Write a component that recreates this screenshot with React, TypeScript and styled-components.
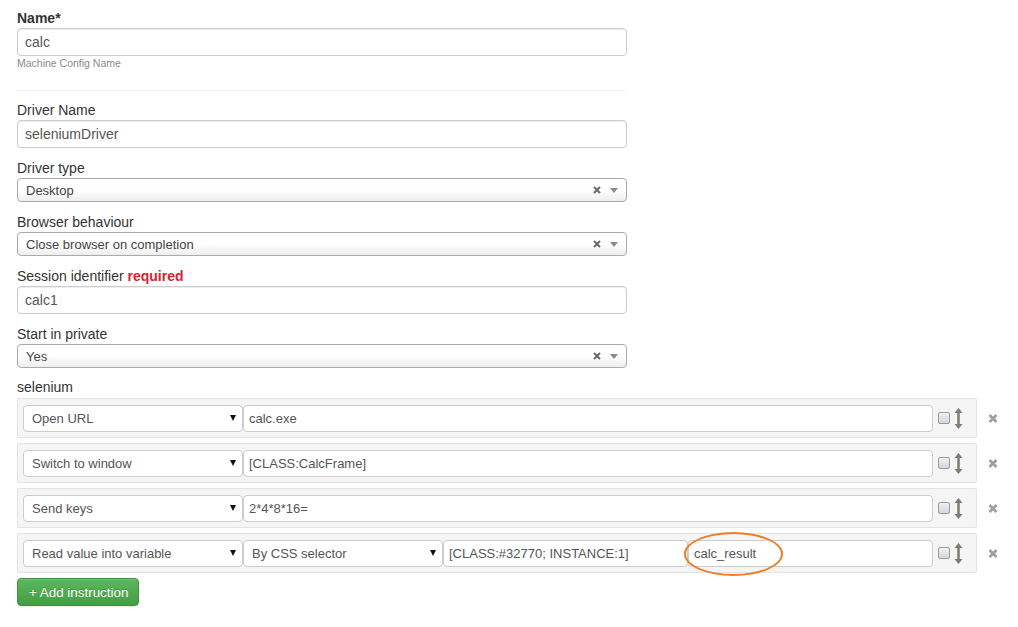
import styled, { createGlobalStyle } from "styled-components";

const GlobalStyle = createGlobalStyle`
  body {
    margin: 0;
    background: #fff;
    font-family: "Liberation Sans", Arial, sans-serif;
    color: #333;
  }
`;

const Page = styled.div`
  padding: 8px 17px 20px;
`;

const Form = styled.div`
  width: 610px;
`;

const Field = styled.div<{ $gap?: number }>`
  margin-bottom: ${(p) => (p.$gap ?? 10)}px;
`;

const Label = styled.div<{ $strong?: boolean }>`
  height: 20px;
  line-height: 20px;
  font-size: 14px;
  font-weight: ${(p) => (p.$strong ? 700 : 400)};
  color: #333;
`;

const Required = styled.span`
  color: #d9232e;
  font-weight: 700;
`;

const TextInput = styled.div`
  box-sizing: border-box;
  height: 28px;
  line-height: 26px;
  padding: 0 7px;
  border: 1px solid #ccc;
  border-radius: 4px;
  background: #fff;
  box-shadow: inset 0 1px 1px rgba(0, 0, 0, 0.075);
  font-size: 14px;
  color: #555;
`;

const Help = styled.div`
  margin-top: 1px;
  height: 12px;
  line-height: 12px;
  font-size: 10.5px;
  color: #8a8a8a;
`;

const Divider = styled.hr`
  margin: 21px 2px 9px 0;
  border: 0;
  border-top: 1px solid #eee;
`;

const Choice = styled.div`
  box-sizing: border-box;
  display: flex;
  align-items: center;
  height: 24px;
  padding: 0 8px;
  border: 1px solid #aaa;
  border-radius: 4px;
  background: linear-gradient(to top, #eee 0%, #fff 50%);
  font-size: 13px;
  color: #444;
`;

const ChoiceText = styled.span`
  flex: 1;
`;

const ChoiceClear = styled.svg`
  margin-right: 9px;
`;

const ChoiceArrow = styled.svg`
  margin-top: 1px;
`;

const SectionLabel = styled.div`
  height: 21px;
  line-height: 20px;
  font-size: 14px;
  color: #333;
`;

const InstructionList = styled.div`
  display: flex;
  flex-direction: column;
  gap: 5px;
`;

const InstructionLine = styled.div`
  display: flex;
  align-items: center;
`;

const Well = styled.div`
  box-sizing: border-box;
  display: flex;
  align-items: center;
  width: 960px;
  height: 40px;
  padding: 5px;
  border: 1px solid #e3e3e3;
  border-radius: 2px;
  background: #f5f5f5;
`;

const Dropdown = styled.div<{ $width: number; $pad?: number }>`
  box-sizing: border-box;
  display: flex;
  align-items: center;
  width: ${(p) => p.$width}px;
  height: 27px;
  padding: 0 6px 0 ${(p) => p.$pad ?? 8}px;
  border: 1px solid #ccc;
  border-radius: 4px;
  background: #fff;
  font-size: 13px;
  color: #555;
`;

const DropdownText = styled.span`
  flex: 1;
`;

const Caret = styled.span`
  width: 0;
  height: 0;
  border-left: 3.5px solid transparent;
  border-right: 3.5px solid transparent;
  border-top: 6px solid #111;
`;

const ValueBox = styled.div`
  position: relative;
  box-sizing: border-box;
  flex: 1;
  height: 27px;
  line-height: 25px;
  padding: 0 5px;
  border: 1px solid #ccc;
  border-radius: 4px;
  background: #fff;
  font-size: 13px;
  color: #555;
  white-space: nowrap;
`;

const Highlight = styled.span`
  position: absolute;
  left: -5px;
  top: -9px;
  width: 95px;
  height: 40px;
  border: 2px solid #f07b24;
  border-radius: 50%;
`;

const Tools = styled.div`
  display: flex;
  align-items: center;
  width: 38px;
`;

const Tick = styled.span`
  box-sizing: border-box;
  width: 12px;
  height: 12px;
  margin-left: 5px;
  border: 1px solid #9a9a9a;
  border-radius: 2px;
  background: linear-gradient(#f0f0f0, #d6d6d6);
`;

const Grip = styled.svg`
  margin-left: 4px;
`;

const Remove = styled.svg`
  margin-left: 11px;
`;

const AddButton = styled.button`
  margin-top: 5px;
  height: 28px;
  padding: 0 10px 0 11px;
  border: 1px solid #3e8f3e;
  border-radius: 4px;
  background: linear-gradient(#5cb85c, #449d44);
  box-shadow: inset 0 1px 0 rgba(255, 255, 255, 0.15), 0 1px 1px rgba(0, 0, 0, 0.075);
  color: #fff;
  font: 13.4px "Liberation Sans", Arial, sans-serif;
  text-shadow: 0 -1px 0 rgba(0, 0, 0, 0.2);
`;

function SelectBox({ value }: { value: string }) {
  return (
    <Choice>
      <ChoiceText>{value}</ChoiceText>
      <ChoiceClear width="8" height="8" viewBox="0 0 8 8">
        <path d="M1 1 L7 7 M7 1 L1 7" stroke="#6a6a6a" strokeWidth="2" />
      </ChoiceClear>
      <ChoiceArrow width="8" height="5" viewBox="0 0 8 5">
        <polygon points="0,0 8,0 4,5" fill="#8a8a8a" />
      </ChoiceArrow>
    </Choice>
  );
}

function RowTools() {
  return (
    <Tools>
      <Tick />
      <Grip width="9" height="21" viewBox="0 0 9 21">
        <line x1="4.5" y1="3" x2="4.5" y2="18" stroke="#c8a060" strokeWidth="2.6" />
        <line x1="4.5" y1="3" x2="4.5" y2="18" stroke="#7c7c7c" strokeWidth="2" />
        <polygon points="0.5,5 4.5,0 8.5,5" fill="#7c7c7c" />
        <polygon points="0.5,16 4.5,21 8.5,16" fill="#7c7c7c" />
      </Grip>
    </Tools>
  );
}

function RemoveIcon() {
  return (
    <Remove width="10" height="9" viewBox="0 0 10 9">
      <path d="M1.5 1 L8.5 8 M8.5 1 L1.5 8" stroke="#a0a0a0" strokeWidth="2.8" />
    </Remove>
  );
}

const steps = [
  { command: "Open URL", value: "calc.exe" },
  { command: "Switch to window", value: "[CLASS:CalcFrame]" },
  { command: "Send keys", value: "2*4*8*16=" },
];

export default function App() {
  return (
    <Page>
      <GlobalStyle />
      <Form>
        <Label $strong>Name*</Label>
        <TextInput>calc</TextInput>
        <Help>Machine Config Name</Help>
        <Divider />

        <Field>
          <Label>Driver Name</Label>
          <TextInput>seleniumDriver</TextInput>
        </Field>
        <Field>
          <Label>Driver type</Label>
          <SelectBox value="Desktop" />
        </Field>
        <Field>
          <Label>Browser behaviour</Label>
          <SelectBox value="Close browser on completion" />
        </Field>
        <Field>
          <Label>
            Session identifier <Required>required</Required>
          </Label>
          <TextInput>calc1</TextInput>
        </Field>
        <Field $gap={9}>
          <Label>Start in private</Label>
          <SelectBox value="Yes" />
        </Field>
      </Form>

      <SectionLabel>selenium</SectionLabel>
      <InstructionList>
        {steps.map((s) => (
          <InstructionLine key={s.command}>
            <Well>
              <Dropdown $width={220}>
                <DropdownText>{s.command}</DropdownText>
                <Caret />
              </Dropdown>
              <ValueBox>{s.value}</ValueBox>
              <RowTools />
            </Well>
            <RemoveIcon />
          </InstructionLine>
        ))}
        <InstructionLine>
          <Well>
            <Dropdown $width={220}>
              <DropdownText>Read value into variable</DropdownText>
              <Caret />
            </Dropdown>
            <Dropdown $width={200}>
              <DropdownText>By CSS selector</DropdownText>
              <Caret />
            </Dropdown>
            <ValueBox>[CLASS:#32770; INSTANCE:1]</ValueBox>
            <ValueBox>
              calc_result
              <Highlight />
            </ValueBox>
            <RowTools />
          </Well>
          <RemoveIcon />
        </InstructionLine>
      </InstructionList>

      <AddButton>+ Add instruction</AddButton>
    </Page>
  );
}
